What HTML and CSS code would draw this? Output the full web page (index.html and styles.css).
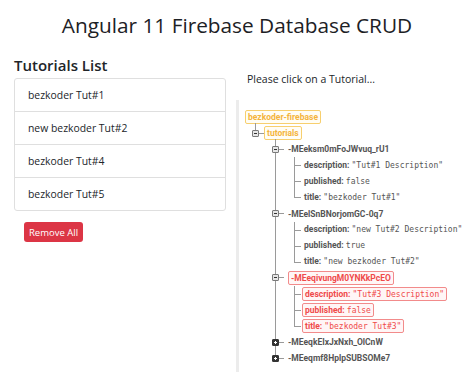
FILE: index.html
```html
<!DOCTYPE html>
<html lang="en">
<head>
    <meta charset="UTF-8">
    <meta name="viewport" content="width=device-width, initial-scale=1.0">
    <title>Angular 11 Firebase Database CRUD</title>
    <link rel="stylesheet" href="styles.css">
</head>
<body>
    <div class="container">
        <h1 class="title">Angular 11 Firebase Database CRUD</h1>
        <div class="row">
            <div class="col-list">
                <h4>Tutorials List</h4>
                <ul class="list-group">
                    <li class="list-item">bezkoder Tut#1</li>
                    <li class="list-item">new bezkoder Tut#2</li>
                    <li class="list-item">bezkoder Tut#4</li>
                    <li class="list-item">bezkoder Tut#5</li>
                </ul>
                <button class="btn-danger">Remove All</button>
            </div>
            <div class="col-detail">
                <p class="hint">Please click on a Tutorial...</p>
                <div class="db-panel">
                    <ul class="tree">
                        <li>
                            <div class="node"><span class="label root">bezkoder-firebase</span></div>
                            <ul class="branch lvl-1">
                                <li>
                                    <div class="node"><span class="toggle open"></span><span class="dash"></span><span class="label root">tutorials</span></div>
                                    <ul class="branch lvl-2">
                                        <li>
                                            <div class="node"><span class="toggle open"></span><span class="dash"></span><span class="key">-MEeksm0mFoJWvuq_rU1</span></div>
                                            <ul class="branch lvl-3">
                                                <li><div class="node"><span class="field"><b>description:</b> <code>"Tut#1 Description"</code></span></div></li>
                                                <li><div class="node"><span class="field"><b>published:</b> <code>false</code></span></div></li>
                                                <li><div class="node"><span class="field"><b>title:</b> <code>"bezkoder Tut#1"</code></span></div></li>
                                            </ul>
                                        </li>
                                        <li>
                                            <div class="node"><span class="toggle open"></span><span class="dash"></span><span class="key">-MEelSnBNorjomGC-0q7</span></div>
                                            <ul class="branch lvl-3">
                                                <li><div class="node"><span class="field"><b>description:</b> <code>"new Tut#2 Description"</code></span></div></li>
                                                <li><div class="node"><span class="field"><b>published:</b> <code>true</code></span></div></li>
                                                <li><div class="node"><span class="field"><b>title:</b> <code>"new bezkoder Tut#2"</code></span></div></li>
                                            </ul>
                                        </li>
                                        <li>
                                            <div class="node"><span class="toggle open"></span><span class="dash"></span><span class="key removed">-MEeqivungM0YNKkPcEO</span></div>
                                            <ul class="branch lvl-3">
                                                <li><div class="node"><span class="field removed"><b>description:</b> <code>"Tut#3 Description"</code></span></div></li>
                                                <li><div class="node"><span class="field removed"><b>published:</b> <code>false</code></span></div></li>
                                                <li><div class="node"><span class="field removed"><b>title:</b> <code>"bezkoder Tut#3"</code></span></div></li>
                                            </ul>
                                        </li>
                                        <li>
                                            <div class="node"><span class="toggle closed"></span><span class="dash"></span><span class="key">-MEeqkEIxJxNxh_OlCnW</span></div>
                                        </li>
                                        <li>
                                            <div class="node"><span class="toggle closed"></span><span class="dash"></span><span class="key">-MEeqmf8HplpSUBSOMe7</span></div>
                                        </li>
                                    </ul>
                                </li>
                            </ul>
                        </li>
                    </ul>
                </div>
            </div>
        </div>
    </div>
</body>
</html>
```

FILE: styles.css
```css
body {
    margin: 0;
    font-family: "Open Sans", "Noto Sans", sans-serif;
    color: #212529;
    background: #fff;
}
.container {
    padding: 10px 14px 0;
}
.title {
    margin: 0 0 14px;
    text-align: center;
    font-size: 20.8px;
    font-weight: 400;
    line-height: 30px;
    color: #1d2125;
}
.row {
    display: flex;
}
.col-list {
    flex: 0 0 212px;
}
.col-list h4 {
    margin: 0 0 2px;
    font-size: 15px;
    font-weight: 600;
    line-height: 22px;
}
.list-group {
    list-style: none;
    margin: 0;
    padding: 0;
    border: 1px solid #dfdfdf;
    border-radius: 3px;
}
.list-item {
    height: 32px;
    padding: 0 13px;
    font-size: 10.4px;
    line-height: 32px;
    border-top: 1px solid #dfdfdf;
}
.list-item:first-child {
    border-top: none;
}
.btn-danger {
    margin: 11px 0 0 10px;
    height: 20px;
    padding: 0 5px;
    background: #dc3545;
    color: #fff;
    border: none;
    border-radius: 3px;
    font-family: inherit;
    font-size: 9.5px;
    cursor: pointer;
}
.col-detail {
    flex: 1;
    margin-left: 10px;
}
.hint {
    margin: 18px 0 0 11px;
    font-size: 10.5px;
    line-height: 14px;
}
.db-panel {
    margin-top: 14px;
    height: 272px;
    border-left: 3px solid #ececec;
    padding: 9px 0 0 6px;
    font-family: Roboto, "Liberation Sans", sans-serif;
    font-size: 8.5px;
    color: #555;
}
.tree,
.branch {
    list-style: none;
    margin: 0;
    padding: 0;
}
.node {
    display: flex;
    align-items: center;
    height: 16.1px;
    white-space: nowrap;
}
.branch > li {
    position: relative;
}
.branch > li::before {
    content: "";
    position: absolute;
    top: 0;
    bottom: 0;
    left: 3px;
    border-left: 1px solid #9a9a9a;
}
.branch > li:last-child::before {
    bottom: auto;
    height: 8px;
}
.lvl-1 {
    padding-left: 7px;
}
.lvl-1 > li::before {
    top: -2px;
}
.lvl-2 {
    padding-left: 20px;
}
.lvl-2 > li::before {
    top: -2px;
}
.lvl-3 {
    padding-left: 22px;
}
.lvl-3 > li::before {
    left: 0;
}
.lvl-3 > li::after {
    content: "";
    position: absolute;
    top: 8px;
    left: 0;
    width: 7px;
    border-top: 1px solid #9a9a9a;
}
.lvl-3 .node {
    padding-left: 8px;
}
.toggle {
    position: relative;
    z-index: 1;
    width: 5px;
    height: 5px;
    border: 1px solid #7a7a7a;
    border-radius: 1px;
    background: #e6e6e6;
}
.toggle::after {
    content: "";
    position: absolute;
    left: 1px;
    top: 2px;
    width: 3px;
    border-top: 1px solid #333;
}
.toggle.closed {
    background: #333;
    border-color: #333;
}
.toggle.closed::after {
    border-top-color: #fff;
}
.toggle.closed::before {
    content: "";
    position: absolute;
    left: 2px;
    top: 1px;
    height: 3px;
    border-left: 1px solid #fff;
}
.dash {
    width: 5px;
    border-top: 1px solid #9a9a9a;
}
.label {
    height: 12px;
    padding: 0 2px;
    border: 1px solid;
    border-radius: 2px;
    font-weight: 700;
    line-height: 12px;
}
.label.root {
    color: #f4b43c;
    border-color: #f7cf6e;
    background: #fffdf5;
}
.key {
    padding: 0 2px 0 4px;
    font-weight: 700;
    line-height: 12px;
}
.field {
    padding: 0 2px;
    line-height: 12px;
}
.field b {
    font-weight: 700;
}
.field code {
    font-family: "DejaVu Sans Mono", "Liberation Mono", monospace;
    font-size: 8px;
}
.removed {
    height: 12px;
    border: 1px solid #f28b8b;
    border-radius: 2px;
    background: #fff6f6;
    color: #ef4a4a;
}
.key.removed {
    margin-left: 4px;
    padding: 0 2px;
}
```
